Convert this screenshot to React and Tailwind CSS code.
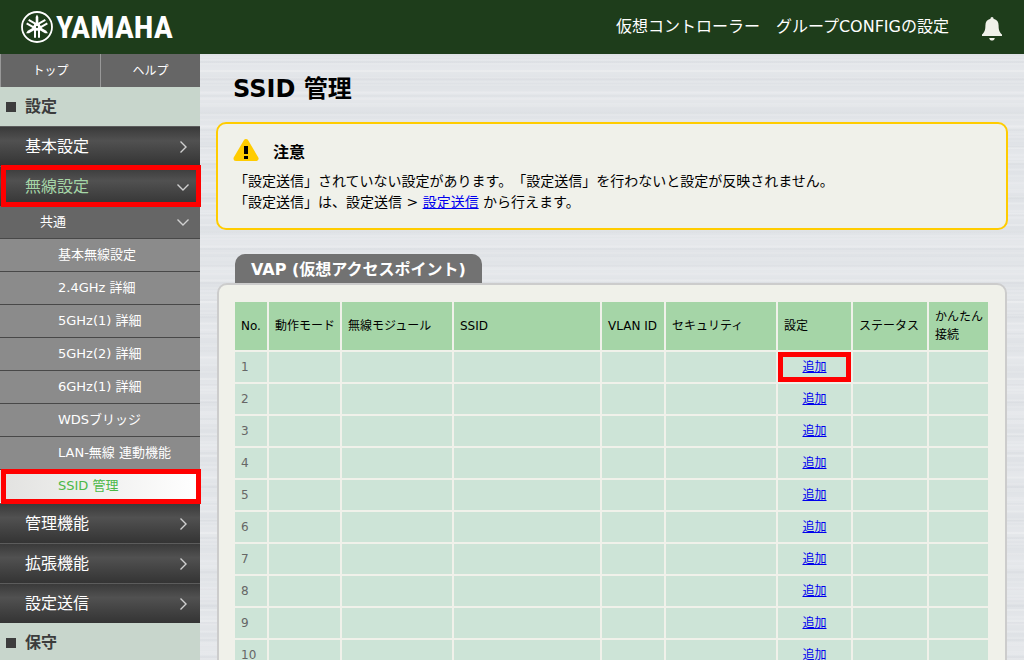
import { useState } from 'react'

const submenu = [
  '基本無線設定',
  '2.4GHz 詳細',
  '5GHz(1) 詳細',
  '5GHz(2) 詳細',
  '6GHz(1) 詳細',
  'WDSブリッジ',
  'LAN-無線 連動機能',
  'SSID 管理',
]

const columns = [
  { name: 'No.', width: 'w-[32px]' },
  { name: '動作モード', width: 'w-[71px]' },
  { name: '無線モジュール', width: 'w-[110px]' },
  { name: 'SSID', width: '' },
  { name: 'VLAN ID', width: 'w-[62px]' },
  { name: 'セキュリティ', width: 'w-[110px]' },
  { name: '設定', width: 'w-[73px]' },
  { name: 'ステータス', width: 'w-[74px]' },
  { name: 'かんたん接続', width: 'w-[59px]' },
]

const rows = Array.from({ length: 10 }, (_, i) => i + 1)

const Logo = () => (
  <a href="#top" className="flex items-center gap-[3px] text-white">
    <svg viewBox="0 0 32 32" className="w-8 h-8" fill="none" stroke="currentColor">
      <circle cx="16" cy="16" r="15" strokeWidth="1.8" />
      {[0, 120, 240].map((angle) => (
        <g key={angle} transform={`rotate(${angle} 16 16)`}>
          <path d="M16 3.4 L17.3 6 V13 H14.7 V6 Z" fill="currentColor" stroke="none" />
          <path d="M14 26.8 V14.2 Q14 12.4 16 12.4 Q18 12.4 18 14.2 V26.8" strokeWidth="2" />
        </g>
      ))}
    </svg>
    <span className="text-[32px] leading-[54px] font-bold font-['Liberation_Sans_Narrow','Roboto_Condensed',Roboto,sans-serif]">
      YAMAHA
    </span>
  </a>
)

const Chevron = ({ open }) => (
  <svg viewBox="0 0 12 12" className="w-3 h-3" fill="none" stroke="#d0d0d0" strokeWidth="1.4">
    <path d={open ? 'M0.5 3.5 L6 9 L11.5 3.5' : 'M3.5 0.5 L9 6 L3.5 11.5'} />
  </svg>
)

const Marker = () => (
  <span className="absolute left-px -right-px -top-px -bottom-px border-[5px] border-[#ff0000] pointer-events-none z-10" />
)

const MenuButton = ({ label, open, onClick }) => (
  <button
    onClick={onClick}
    className={`w-full h-10 pl-[25px] pr-[11px] flex items-center justify-between border-t border-[#5c5c5c] bg-linear-to-b from-[#3a3a3a] via-[#515151] via-35% to-[#343434] text-base ${
      open ? 'text-[#a5d5a7]' : 'text-white'
    }`}
  >
    {label}
    <Chevron open={open} />
  </button>
)

const SectionTitle = ({ children }) => (
  <h2 className="h-[39px] pt-px pl-[6px] flex items-center gap-[9px] bg-[#c8d6cc] text-base font-bold text-[#3c3c3c]">
    <span className="w-[10px] h-[10px] bg-[#3c3c3c]" />
    {children}
  </h2>
)

const App = () => {
  const [wirelessOpen, setWirelessOpen] = useState(true)
  const [current, setCurrent] = useState('SSID 管理')

  return (
    <div className="h-screen overflow-hidden flex flex-col text-black font-['DejaVu_Sans','Noto_Sans_CJK_JP',sans-serif]">
      <header className="h-[54px] shrink-0 bg-[#1e3d1b] flex items-center justify-between pl-[21px] pr-[22px]">
        <Logo />
        <div className="flex items-center gap-[33px] text-base text-white">
          <span>仮想コントローラー　グループCONFIGの設定</span>
          <button aria-label="通知" className="text-[#f0f1ea]">
            <svg viewBox="0 0 20 24" className="w-5 h-6 mt-1" fill="currentColor">
              <path d="M10 0 C11 0 11.5 0.7 11.5 1.8 C15 2.6 16.6 5 16.6 8.5 C16.6 13 17.4 15 20 17.6 V19 H0 V17.6 C2.6 15 3.4 13 3.4 8.5 C3.4 5 5 2.6 8.5 1.8 C8.5 0.7 9 0 10 0 Z" />
              <path d="M7.2 21 H12.8 C12.4 22.8 11.4 23.6 10 23.6 C8.6 23.6 7.6 22.8 7.2 21 Z" />
            </svg>
          </button>
        </div>
      </header>

      <div className="flex-1 min-h-0 flex">
        <nav className="relative z-10 w-[200px] shrink-0">
          <div className="flex h-[33px] text-xs text-white bg-[#666666]">
            <a href="#top" className="flex-1 flex items-center justify-center border-l border-[#999999]">トップ</a>
            <a href="#help" className="flex-1 flex items-center justify-center border-l border-[#999999]">ヘルプ</a>
          </div>
          <SectionTitle>設定</SectionTitle>
          <MenuButton label="基本設定" />
          <div className="relative">
            <MenuButton label="無線設定" open={wirelessOpen} onClick={() => setWirelessOpen(!wirelessOpen)} />
            <Marker />
          </div>
          {wirelessOpen && (
            <>
              <button className="w-full h-[33px] pl-10 pr-[11px] flex items-center justify-between border-b border-[#484848] bg-[#666666] text-[13px] text-white">
                共通
                <Chevron open />
              </button>
              <ul>
                {submenu.map((name) => (
                  <li key={name} className="relative">
                    <a
                      href="#page"
                      onClick={() => setCurrent(name)}
                      className={`h-[33px] pl-[58px] flex items-center border-b text-[13px] ${
                        current === name
                          ? 'border-white bg-linear-to-r from-[#e2e2e0] to-white text-[#4cb848]'
                          : 'border-[#484848] bg-[#8b8b8b] text-white'
                      }`}
                    >
                      {name}
                    </a>
                    {current === name && <Marker />}
                  </li>
                ))}
              </ul>
            </>
          )}
          <MenuButton label="管理機能" />
          <MenuButton label="拡張機能" />
          <MenuButton label="設定送信" />
          <SectionTitle>保守</SectionTitle>
        </nav>

        <main className="flex-1 min-w-0 overflow-hidden px-4 pt-[17px] bg-[#dfe2e6] bg-[repeating-linear-gradient(180deg,#ffffff00_0px,#ffffff00_5px,#ffffff40_6px,#ffffff00_7px,#ffffff00_11px),repeating-linear-gradient(180deg,#c8ccd200_0px,#c8ccd200_7px,#c8ccd255_8px,#c8ccd200_9px,#c8ccd200_17px),repeating-linear-gradient(180deg,#ffffff00_0px,#ffffff00_2px,#ffffff33_3px,#ffffff00_4px,#ffffff00_7px),repeating-linear-gradient(180deg,#ffffff00_0px,#ffffff33_15px,#ffffff00_29px)]">
          <h1 className="pl-[17px] text-2xl leading-9 font-bold">SSID 管理</h1>

          <section className="mt-[15px] px-4 pt-[14px] pb-[15px] rounded-[10px] border-2 border-[#ffcc00] bg-[#f0f1ea]">
            <h2 className="flex items-start gap-[14px] text-base leading-[30px] font-bold">
              <svg viewBox="0 0 26 24" className="w-[26px] h-6 -ml-px">
                <path d="M13 3.5 L23 20.5 H3 Z" fill="#ffcc00" stroke="#ffcc00" strokeWidth="5" strokeLinejoin="round" />
                <path d="M11 8 h4 v8 h-4 Z M11 18 h4 v3 h-4 Z" fill="#000000" />
              </svg>
              注意
            </h2>
            <p className="mt-[3px] text-sm leading-[21px] [text-spacing-trim:space-all]">
              「設定送信」されていない設定があります。「設定送信」を行わないと設定が反映されません。
              <br />
              「設定送信」は、設定送信 &gt; <a href="#send" className="text-[#0000ee] underline">設定送信</a> から行えます。
            </p>
          </section>

          <section className="mt-6 mx-px">
            <h2 className="w-fit h-[29px] ml-[18px] px-4 rounded-t-[10px] bg-[#727272] text-base leading-8 font-bold text-white">
              VAP (仮想アクセスポイント)
            </h2>
            <div className="pl-[14px] pr-[15px] pt-[15px] pb-4 rounded-[10px] border-2 border-[#cccccc] bg-[#f0f1ea]">
              <table className="w-full table-fixed border-separate border-spacing-[2px] text-xs">
                <colgroup>
                  {columns.map((col) => (
                    <col key={col.name} className={col.width} />
                  ))}
                </colgroup>
                <thead>
                  <tr className="h-12 bg-[#a5d5a7]">
                    {columns.map((col) => (
                      <th key={col.name} className="pl-[6px] pr-0 py-0 text-left leading-[18px] font-normal">{col.name}</th>
                    ))}
                  </tr>
                </thead>
                <tbody>
                  {rows.map((no) => (
                    <tr key={no} className="h-[30px] bg-[#cde4d7]">
                      {columns.map((col) => (
                        <td key={col.name} className="relative px-[6px] py-0 text-[#666666]">
                          {col.name === 'No.' && no}
                          {col.name === '設定' && (
                            <a href="#add" className="block text-center text-[#0000ee] underline">追加</a>
                          )}
                          {col.name === '設定' && no === 1 && (
                            <span className="absolute inset-0 border-[5px] border-[#ff0000] pointer-events-none" />
                          )}
                        </td>
                      ))}
                    </tr>
                  ))}
                </tbody>
              </table>
            </div>
          </section>
        </main>
      </div>
    </div>
  )
}

export default App
